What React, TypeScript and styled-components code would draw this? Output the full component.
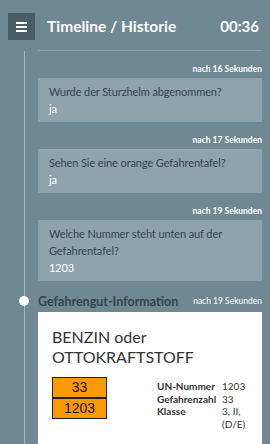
import styled, { createGlobalStyle } from 'styled-components';

const Global = createGlobalStyle`
    html, body {
        margin: 0;
        padding: 0;
        background: #6f8893;
    }
    body {
        font-family: 'Lato', 'Open Sans', sans-serif;
    }
`;

type Entry = {
    time: string;
    question: string;
    answer: string;
};

const entries: Entry[] = [
    { time: 'nach 16 Sekunden', question: 'Wurde der Sturzhelm abgenommen?', answer: 'ja' },
    { time: 'nach 17 Sekunden', question: 'Sehen Sie eine orange Gefahrentafel?', answer: 'ja' },
    { time: 'nach 19 Sekunden', question: 'Welche Nummer steht unten auf der Gefahrentafel?', answer: '1203' },
];

const facts = [
    ['UN-Nummer', '1203'],
    ['Gefahrenzahl', '33'],
    ['Klasse', '3, II, (D/E)'],
];

export default function App() {
    return (
        <Page>
            <Global />
            <Header>
                <MenuButton>
                    <svg width='11' height='10' viewBox='0 0 11 10'>
                        <rect x='0' y='0' width='11' height='2' fill='#fff' />
                        <rect x='0' y='4' width='11' height='2' fill='#fff' />
                        <rect x='0' y='8' width='11' height='2' fill='#fff' />
                    </svg>
                </MenuButton>
                <Title>Timeline / Historie</Title>
                <Clock>00:36</Clock>
            </Header>
            <Timeline>
                {entries.map((entry, index) => (
                    <Item key={index}>
                        <Stamp>{entry.time}</Stamp>
                        <Card>
                            <Question>{entry.question}</Question>
                            <Answer>{entry.answer}</Answer>
                        </Card>
                    </Item>
                ))}
                <Item>
                    <EventHead>
                        <Dot />
                        <EventTitle>Gefahrengut-Information</EventTitle>
                        <Stamp $light>nach 19 Sekunden</Stamp>
                    </EventHead>
                    <InfoCard>
                        <Substance>BENZIN oder OTTOKRAFTSTOFF</Substance>
                        <InfoRow>
                            <Plate>
                                <PlateCell>33</PlateCell>
                                <PlateCell>1203</PlateCell>
                            </Plate>
                            <Facts>
                                {facts.map(([label, value]) => (
                                    <FactRow key={label}>
                                        <FactLabel>{label}</FactLabel>
                                        <FactValue>{value}</FactValue>
                                    </FactRow>
                                ))}
                            </Facts>
                        </InfoRow>
                    </InfoCard>
                </Item>
            </Timeline>
        </Page>
    );
}

const Page = styled.div`
    width: 270px;
    height: 444px;
    overflow: hidden;
    background: #6f8893;
`;

const Header = styled.div`
    display: flex;
    align-items: center;
    height: 51px;
    padding: 0 11px 0 8px;
    box-sizing: border-box;
    position: relative;

    &::after {
        content: '';
        position: absolute;
        left: 38px;
        right: 9px;
        bottom: 0;
        height: 1px;
        background: #8ea1aa;
    }
`;

const MenuButton = styled.div`
    width: 27px;
    height: 27px;
    margin-top: 2px;
    background: #4a5c65;
    display: flex;
    align-items: center;
    justify-content: center;
`;

const Title = styled.div`
    flex: 1;
    margin-left: 12px;
    color: #fff;
    font-weight: 700;
    font-size: 15.5px;
`;

const Clock = styled.div`
    color: #fff;
    font-weight: 700;
    font-size: 15px;
`;

const Timeline = styled.div`
    position: relative;
    padding: 13px 8px 0 38px;
    display: flex;
    flex-direction: column;
    gap: 13px;

    &::before {
        content: '';
        position: absolute;
        left: 24px;
        top: 0;
        bottom: -100px;
        width: 1px;
        background: #a8b8bf;
    }
`;

const Item = styled.div`
    display: flex;
    flex-direction: column;
    gap: 4px;
`;

const Stamp = styled.div<{ $light?: boolean }>`
    text-align: right;
    font-size: 8.5px;
    line-height: 10px;
    font-weight: ${(p) => (p.$light ? 400 : 700)};
    color: #fff;
    margin-left: auto;
`;

const Card = styled.div`
    background: #8fa3ac;
    padding: 5px 11px;
    font-size: 11px;
    line-height: 17px;
    letter-spacing: -0.1px;
`;

const Question = styled.div`
    color: #37444b;
`;

const Answer = styled.div`
    color: #fff;
`;

const EventHead = styled.div`
    display: flex;
    align-items: center;
    position: relative;
    height: 14px;
`;

const Dot = styled.div`
    position: absolute;
    left: -19px;
    top: 2px;
    width: 10px;
    height: 10px;
    border-radius: 50%;
    background: #fff;
`;

const EventTitle = styled.div`
    font-size: 12.5px;
    font-weight: 700;
    color: #37444b;
`;

const InfoCard = styled.div`
    background: #fff;
    padding: 15px 10px 14px 14px;
`;

const Substance = styled.div`
    font-size: 16px;
    line-height: 20px;
    color: #333;
`;

const InfoRow = styled.div`
    display: flex;
    justify-content: space-between;
    margin-top: 10px;
`;

const Plate = styled.div`
    width: 55px;
    border: 1.5px solid #222;
    box-sizing: border-box;
    background: #222;
    display: flex;
    flex-direction: column;
    gap: 1.5px;
    align-self: flex-start;
`;

const PlateCell = styled.div`
    background: #ff9900;
    text-align: center;
    font-family: 'Liberation Sans', Arial, sans-serif;
    font-size: 14px;
    line-height: 19px;
    color: #111;
`;

const Facts = styled.div`
    display: flex;
    flex-direction: column;
    width: 95px;
    padding-top: 3px;
`;

const FactRow = styled.div`
    display: flex;
    font-size: 10px;
    line-height: 12.5px;
    color: #333;
`;

const FactLabel = styled.div`
    width: 65px;
    font-weight: 700;
`;

const FactValue = styled.div`
    width: 30px;
`;
